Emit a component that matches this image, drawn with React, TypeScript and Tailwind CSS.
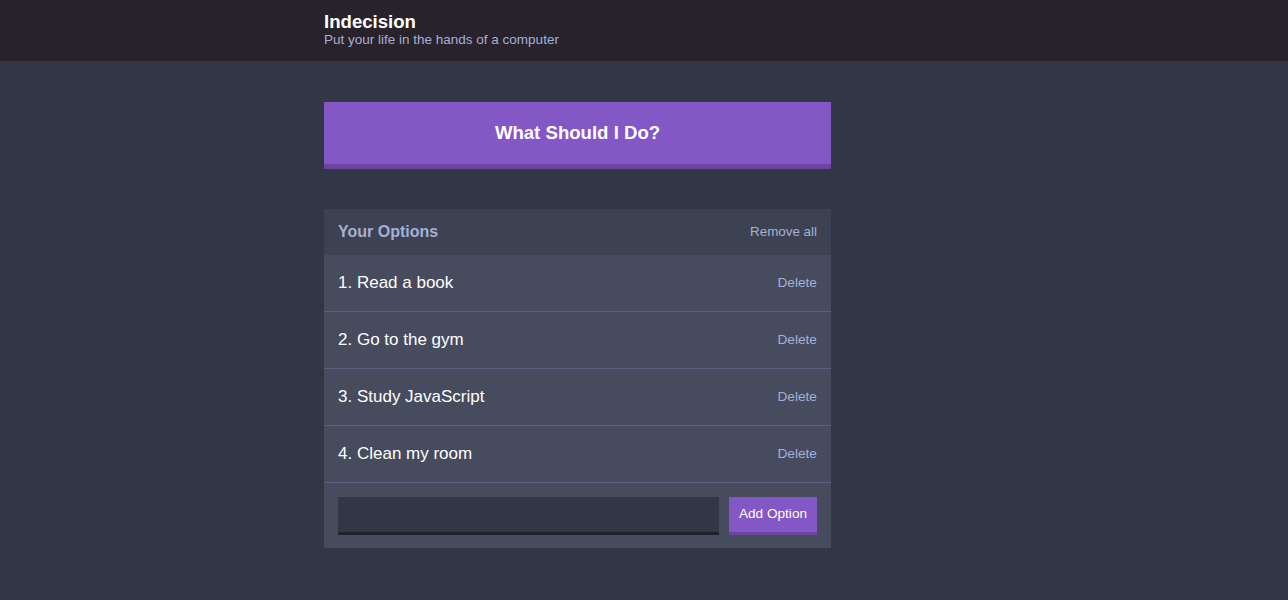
const options = ['Read a book', 'Go to the gym', 'Study JavaScript', 'Clean my room'];

export default function App() {
  return (
    <div className="min-h-[600px] bg-[#333745] font-['Liberation_Sans',Arial,sans-serif]">
      <header className="bg-[#28232a] pt-[12px] pb-[13px]">
        <div className="mx-auto w-[640px]">
          <h1 className="text-[18.6px] leading-[20px] font-bold text-white">Indecision</h1>
          <h2 className="text-[13.5px] leading-[16px] text-[#a5afd7]">Put your life in the hands of a computer</h2>
        </div>
      </header>
      <div className="mx-auto w-[640px] pt-[41px]">
        <div className="w-[507px]">
          <button className="w-full h-[67px] bg-[#8357c5] border-b-[5px] border-[#6a44a0] text-white text-[18.6px] font-bold">
            What Should I Do?
          </button>
          <div className="mt-[40px] bg-[#464b5e]">
            <div className="h-[46px] bg-[#3c4251] flex items-center justify-between px-[14px]">
              <h3 className="text-[16px] font-bold text-[#a5afd7]">Your Options</h3>
              <button className="text-[13.4px] text-[#a5afd7]">Remove all</button>
            </div>
            {options.map((o, i) => (
              <div key={o} className="h-[57px] border-b border-[#596080] flex items-center justify-between px-[14px]">
                <p className="text-[17px] text-white">{i + 1}. {o}</p>
                <button className="text-[13.7px] text-[#a5afd7]">Delete</button>
              </div>
            ))}
            <form className="flex gap-[10px] px-[14px] pt-[14px] pb-[13px]">
              <input className="w-[381px] h-[38px] bg-[#333745] border-b-[3px] border-[#20222b] outline-none text-white px-2" />
              <button type="button" className="w-[88px] h-[38px] bg-[#8357c5] border-b-[3px] border-[#6a44a0] text-white text-[13.6px]">
                Add Option
              </button>
            </form>
          </div>
        </div>
      </div>
    </div>
  );
}
